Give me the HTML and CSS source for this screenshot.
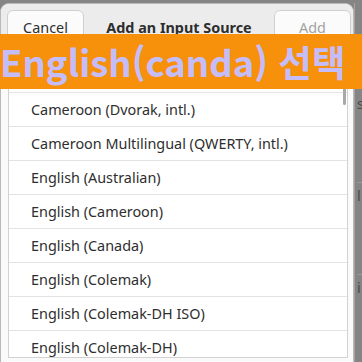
FILE: index.html
```html
<!DOCTYPE html>
<html lang="ko">
<head>
<meta charset="utf-8">
<title>Add an Input Source</title>
<link rel="stylesheet" href="styles.css">
</head>
<body>
<div class="screen">
	<div class="dialog">
		<header class="headerbar">
			<button class="btn">Cancel</button>
			<span class="title">Add an Input Source</span>
			<button class="btn btn-off">Add</button>
		</header>
		<div class="content">
			<div class="list">
				<div class="row">Cameroon (AZERTY, intl.)</div>
				<div class="row">Cameroon (Dvorak, intl.)</div>
				<div class="row">Cameroon Multilingual (QWERTY, intl.)</div>
				<div class="row">English (Australian)</div>
				<div class="row">English (Cameroon)</div>
				<div class="row">English (Canada)</div>
				<div class="row">English (Colemak)</div>
				<div class="row">English (Colemak-DH ISO)</div>
				<div class="row">English (Colemak-DH)</div>
				<div class="thumb"></div>
			</div>
		</div>
	</div>
	<div class="behind">
		<div class="behind-row">s</div>
		<div class="behind-row">l</div>
		<div class="behind-row">i</div>
	</div>
</div>
<div class="banner">English(canda) 선택</div>
</body>
</html>
```

FILE: styles.css
```css
*{
	margin: 0;
	padding: 0;
	box-sizing: border-box;
}
html,
body{
	width: 362px;
	height: 362px;
	overflow: hidden;
}
body{
	position: relative;
	background: #858585;
	font-family: "Noto Sans", "Noto Sans CJK KR", sans-serif;
	font-size: 14.4px;
	color: #2e2e2e;
}
.screen{
	display: flex;
	padding-top: 3px;
}
/* 对话框 */
.dialog{
	width: 354px;
	flex: none;
	background: #fafafa;
	border: 1px solid #b9b9b9;
	border-bottom: none;
	border-radius: 9px 9px 0 0;
	overflow: hidden;
}
.headerbar{
	display: flex;
	align-items: center;
	justify-content: space-between;
	padding: 6px 2px 6px 6px;
	background: #ececec;
	border-bottom: 1px solid #d6d6d6;
}
.btn{
	width: 77px;
	height: 34px;
	font: inherit;
	color: #2e2e2e;
	background: #fbfbfb;
	border: 1px solid #cfcfcf;
	border-radius: 6px;
}
.btn-off{
	color: #a3a3a3;
}
.title{
	font-weight: bold;
	color: #2e2e2e;
}
.content{
	padding: 7px 5px 0 7px;
}
.list{
	position: relative;
	height: 300px;
	overflow: hidden;
	background: #fff;
	border: 1px solid #d2d2d2;
}
.row{
	height: 34px;
	display: flex;
	align-items: center;
	padding-left: 22px;
	border-bottom: 1px solid #e3e3e3;
	white-space: nowrap;
}
.thumb{
	position: absolute;
	top: 4px;
	right: 1px;
	width: 3px;
	height: 42px;
	border-radius: 2px;
	background: #a8a8a8;
}
/* 后面的窗口 */
.behind{
	flex: 1;
	display: flex;
	flex-direction: column;
	padding-top: 88px;
	padding-left: 2px;
	overflow: hidden;
	border-left: 1px solid #a3a3a3;
	color: #4a4a4a;
}
.behind-row{
	height: 92px;
	padding-top: 3px;
	border-bottom: 1px solid #9a9a9a;
	white-space: nowrap;
}
/* 标题横幅 */
.banner{
	position: absolute;
	top: 34px;
	left: 0;
	width: 100%;
	height: 55px;
	line-height: 55px;
	background: #f7900b;
	color: #c5bdf9;
	font-family: "Noto Sans CJK KR", sans-serif;
	font-weight: bold;
	font-size: 36.5px;
	white-space: nowrap;
	overflow: hidden;
}
```
